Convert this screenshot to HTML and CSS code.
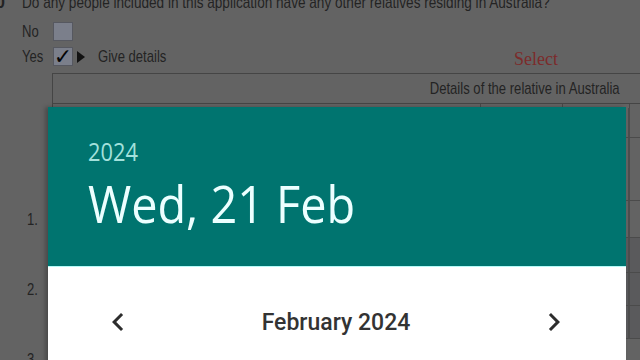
FILE: index.html
```html
<!DOCTYPE html>
<html lang="en">
<head>
<meta charset="utf-8">
<link rel="stylesheet" href="styles.css">
</head>
<body>
<div class="form">
  <div class="question">
    <span class="qnum">30</span>
    <span class="sq qtext">Do any people included in this application have any other relatives residing in Australia?</span>
  </div>
  <div class="choice first">
    <span class="clabel"><span class="sq">No</span></span>
    <span class="box"></span>
  </div>
  <div class="choice">
    <span class="clabel"><span class="sq">Yes</span></span>
    <span class="box checked">✓</span>
    <span class="tri"></span>
    <span class="sq give">Give details</span>
    <span class="select">Select</span>
  </div>
  <div class="table">
    <div class="thead"><span class="sq sqr">Details of the relative in Australia</span></div>
    <div class="tcols"><span></span><span></span><span></span></div>
    <div class="trow r1"></div>
    <div class="trow r2"></div>
    <div class="trow r3"></div>
    <div class="trow r4"></div>
    <div class="trow r5"></div>
    <div class="trow r6"></div>
  </div>
  <ol class="nums">
    <li><span class="sq">1.</span></li>
    <li><span class="sq">2.</span></li>
    <li><span class="sq">3.</span></li>
  </ol>
</div>

<div class="dialog">
  <div class="dhead">
    <div class="dyear">2024</div>
    <div class="ddate">Wed, 21 Feb</div>
  </div>
  <div class="dbody">
    <div class="monthbar">
      <svg class="chev" viewBox="0 0 24 24" width="36" height="36"><path d="M15.41 7.41L14 6l-6 6 6 6 1.41-1.41L10.83 12z"/></svg>
      <span class="month">February 2024</span>
      <svg class="chev" viewBox="0 0 24 24" width="36" height="36"><path d="M10 6L8.59 7.41 13.17 12l-4.58 4.59L10 18l6-6z"/></svg>
    </div>
  </div>
</div>
</body>
</html>
```
FILE: styles.css
```css
html, body {
  margin: 0;
  padding: 0;
  width: 640px;
  height: 360px;
  overflow: hidden;
  background: #636363;
}
.form {
  display: flow-root;
  font-family: "Liberation Sans", Arial, sans-serif;
  font-size: 17px;
  color: #232323;
  position: relative;
  height: 360px;
}
.sq {
  display: inline-block;
  white-space: nowrap;
  transform: scaleX(0.77);
  transform-origin: left center;
}
.sqr { transform-origin: right center; }
.question {
  display: flex;
  height: 20px;
  line-height: 20px;
  margin-top: -7px;
}
.qtext { transform: scaleX(0.8); }
.qnum {
  width: 5px;
  margin-right: 17px;
  text-align: right;
  direction: rtl;
  font-weight: bold;
  white-space: nowrap;
}
.choice {
  display: flex;
  align-items: center;
  height: 25px;
}
.choice.first { margin-top: 6px; }
.clabel {
  width: 31px;
  padding-left: 22px;
}
.box {
  width: 18px;
  height: 17px;
  background: #7b7f8b;
  border: 1px solid #565860;
  display: flex;
  align-items: center;
  justify-content: center;
  color: #050505;
  font-family: "DejaVu Sans", sans-serif;
  font-size: 22px;
  line-height: 17px;
  overflow: visible;
}
.tri {
  width: 0;
  height: 0;
  border-top: 6px solid transparent;
  border-bottom: 6px solid transparent;
  border-left: 8px solid #121212;
  margin-left: 4px;
}
.give { margin-left: 13px; }
.select {
  margin-left: auto;
  margin-right: 82px;
  margin-top: 5px;
  font-family: "Liberation Serif", serif;
  font-size: 18px;
  color: #7c2b2b;
}
.table {
  margin-left: 52px;
  margin-top: 4px;
  border-top: 1px solid #454545;
  border-left: 1px solid #454545;
}
.thead {
  height: 29px;
  display: flex;
  align-items: center;
  justify-content: flex-end;
  padding-right: 20px;
  border-bottom: 1px solid #454545;
}
.tcols {
  display: flex;
  height: 4px;
}
.tcols span { border-right: 1px solid #4a4a4a; }
.tcols span:nth-child(1) { width: 427px; }
.tcols span:nth-child(2) { width: 81px; }
.tcols span:nth-child(3) { width: 66px; }
.trow {
  border-bottom: 1px solid #4b4b4b;
  background: linear-gradient(to right, transparent 575px, #4d4d4d 575px, #4d4d4d 577px, transparent 577px);
}
.r1 { height: 29px; }
.r2 { height: 62px; }
.r3 { height: 36px; }
.r4 { height: 34px; background-color: #5a5a5c; }
.r5 { height: 32px; background-color: #5a5a5c; }
.r6 { height: 32px; background-color: #5a5a5c; }
.nums {
  list-style: none;
  margin: 0;
  padding: 0;
  position: absolute;
  left: 27px;
  top: 211px;
}
.nums li { height: 70px; line-height: 18px; }

.dialog {
  position: absolute;
  left: 48px;
  top: 107px;
  width: 578px;
  height: 270px;
  background: #ffffff;
  box-shadow: -3px 0 4px rgba(0,0,0,0.25);
  font-family: "Open Sans", "Noto Sans", sans-serif;
}
.dhead {
  background: #00746f;
  height: 160px;
  box-sizing: border-box;
  padding: 31px 0 0 40px;
  border-bottom: 1px solid #b5fbf8;
}
.dyear {
  font-size: 26px;
  line-height: 26px;
  color: #a3e1dc;
  transform: scaleX(0.84);
  transform-origin: left center;
}
.ddate {
  margin-top: 13px;
  font-size: 52px;
  line-height: 52px;
  color: #ecffff;
  white-space: nowrap;
  transform: scaleX(0.9);
  transform-origin: left center;
}
.monthbar {
  display: flex;
  align-items: center;
  justify-content: space-between;
  margin-top: 37px;
  padding: 0 54px 0 52px;
}
.chev { fill: #2d2d2d; display: block; }
.month {
  font-family: Roboto, "Noto Sans", sans-serif;
  font-weight: 500;
  font-size: 23px;
  color: #333333;
}
```
